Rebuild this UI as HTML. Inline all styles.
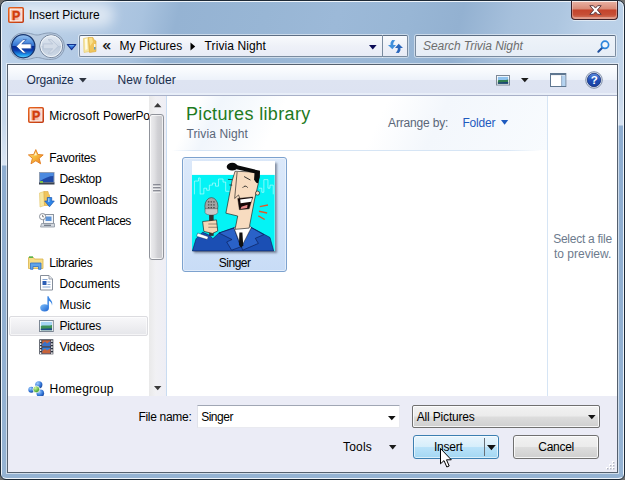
<!DOCTYPE html>
<html lang="en">
<head>
<meta charset="utf-8">
<title>Insert Picture</title>
<style>
html,body{margin:0;padding:0;}
body{width:625px;height:480px;overflow:hidden;position:relative;background:#6f6f6f;font-family:"Liberation Sans",sans-serif;font-size:12px;color:#000;}
div,span{position:absolute;box-sizing:border-box;white-space:nowrap;}
svg{position:absolute;overflow:visible;}
.t{line-height:14px;height:14px;}
/* frame */
#frame{left:0;top:0;width:625px;height:480px;border-radius:7px 7px 6px 6px;background:linear-gradient(104deg,#bdd3ea 0px,#b3cae4 90px,#a9c3df 140px,#95b3d3 175px,#98b6d5 260px,#9cb9d8 330px,#98b6d5 400px,#93b1d1 450px,#a6c0dc 500px,#adc6e0 545px,#b9cfe7 575px,#bcd2e9 640px);border:1px solid #1d2936;box-shadow:inset 0 0 0 1px #eef4fa;}
#lstrip{left:2px;top:30px;width:5px;height:447px;background:linear-gradient(180deg,#bcd2e9 0px,#c5d7eb 90px,#dbe6f3 135px,#8eadd0 136px,#95b3d3 447px);}
#rstrip{left:618px;top:30px;width:5px;height:447px;background:linear-gradient(180deg,#bcd2e9 0px,#c9d9ec 70px,#d6e2f1 95px,#8eadd0 96px,#95b3d3 447px);}
#bstrip{left:4px;top:472px;width:617px;height:6px;background:#95b3d3;border-radius:0 0 4px 4px;}
#glow{left:14px;top:3px;width:100px;height:24px;border-radius:12px;background:rgba(255,255,255,.55);filter:blur(6px);}
#title{left:29px;top:8px;font-size:12px;color:#000;}
#close{left:571px;top:1px;width:47px;height:19px;border-radius:0 0 4px 4px;border:1px solid #3c2028;border-top:none;background:linear-gradient(180deg,#e9b3a5 0%,#d98a76 44%,#c4432c 50%,#c64e36 75%,#d57a62 100%);box-shadow:inset 0 1px 0 rgba(255,255,255,.75),inset 0 -1px 0 1px rgba(255,255,255,.3),0 1px 0 rgba(255,255,255,.55);}
/* nav row */
.field{background:linear-gradient(180deg,#f8fafd 0%,#eef1f8 50%,#e8ecf6 100%);border:1px solid #7a8b9f;border-top-color:#5d6e84;border-radius:2px;box-shadow:0 0 0 1px rgba(255,255,255,.5);}
#addr{left:79px;top:35px;width:303px;height:22px;border-radius:2px 0 0 2px;border-right:none;}
#refresh{left:382px;top:35px;width:26px;height:22px;border-radius:0 2px 2px 0;clip-path:inset(-1px -1px -1px 0);}
#search{left:415px;top:35px;width:201px;height:22px;background:linear-gradient(180deg,#eef3f9 0%,#e6edf6 100%);}
#search .t{left:7px;top:3px;font-style:italic;color:#6d6d6d;letter-spacing:-0.07px;}
/* client */
#cborder{left:7px;top:64px;width:611px;height:409px;border:1px solid #55606e;box-shadow:0 0 0 1px rgba(255,255,255,.55);background:#fff;}
#toolbar{left:8px;top:65px;width:609px;height:31px;background:linear-gradient(180deg,#fdfeff 0px,#f6f9fd 7px,#edf2fa 14.500px,#dee4f2 15.500px,#dde3f2 28px,#e8eef8 28.500px,#e8eef8 30px);border-bottom:1px solid #a8b0c8;}
.tb{color:#1a2e4d;}
#navpane{left:8px;top:96px;width:141px;height:300px;background:#fff;overflow:hidden;}
#vscroll{left:149px;top:96px;width:17px;height:300px;background:linear-gradient(90deg,#e9e9e9 0%,#f1f1f4 40%,#eeeef5 100%);}
#vdiv{left:166px;top:96px;width:1px;height:300px;background:#c9dcf1;}
#pdiv{left:547px;top:96px;width:1px;height:300px;background:#d6e5f5;}
#bottom{left:8px;top:396px;width:609px;height:76px;background:#ebecf6;}
.btn{border:1px solid #707070;border-radius:3px;background:linear-gradient(180deg,#f2f2f2 0%,#ebebeb 48%,#dddddd 52%,#cfcfcf 100%);box-shadow:inset 0 0 0 1px rgba(255,255,255,.8);}
.g{color:#5a6678;}
</style>
</head>
<body>
<div id="frame"></div><div id="lstrip"></div><div id="rstrip"></div><div id="bstrip"></div>
<div id="glow"></div>
<!-- title -->
<svg style="left:8px;top:7px" width="16" height="16" viewBox="0 0 16 16">
  <defs><linearGradient id="gppa" x1="0" y1="0" x2="1" y2="1"><stop offset="0" stop-color="#e8651f"/><stop offset="1" stop-color="#c23a12"/></linearGradient></defs>
  <rect x="0.800" y="0.800" width="14.400" height="14.400" rx="1" fill="#fff" stroke="url(#gppa)" stroke-width="1.600"/>
  <rect x="2.600" y="2.600" width="10.800" height="10.800" fill="#f4bba6"/>
  <rect x="10.500" y="2.600" width="2.900" height="10.800" fill="#f9d6ca"/>
  <text x="4" y="13" font-family="Liberation Sans, sans-serif" font-weight="bold" font-size="12.500" fill="#d13c0c" stroke="#d13c0c" stroke-width="0.400">P</text>
</svg>
<span id="title" class="t">Insert Picture</span>
<div id="close">
  <svg style="left:17px;top:4px" width="13" height="10" viewBox="0 0 13 10">
    <path d="M0.8 0.7 L4.4 0.7 L6.5 3.1 L8.6 0.7 L12.2 0.7 L8.4 5 L12.2 9.300 L8.6 9.300 L6.5 6.900 L4.4 9.300 L0.8 9.300 L4.6 5 Z" fill="#fff" stroke="#5d3a40" stroke-width="1"/>
  </svg>
</div>
<!-- nav buttons -->
<svg style="left:8px;top:32px" width="72" height="30" viewBox="0 0 72 30">
  <defs>
    <linearGradient id="gback" x1="0" y1="0" x2="0" y2="1">
      <stop offset="0" stop-color="#9cc4f0"/><stop offset="0.25" stop-color="#5e9be4"/><stop offset="0.49" stop-color="#2f6fd0"/><stop offset="0.5" stop-color="#0a2a92"/><stop offset="0.68" stop-color="#0c3eb0"/><stop offset="0.86" stop-color="#1d93ea"/><stop offset="1" stop-color="#5fd6ff"/>
    </linearGradient>
    <linearGradient id="gfwd" x1="0" y1="0" x2="0" y2="1">
      <stop offset="0" stop-color="#e3eaf3"/><stop offset="0.49" stop-color="#ccd7e5"/><stop offset="0.5" stop-color="#bdcadb"/><stop offset="1" stop-color="#d0dbe8"/>
    </linearGradient>
  </defs>
  <path d="M15.300 0.900 C24 0.900 25 3 29.200 3 C33.500 3 34.500 0.900 43.200 0.900 A13.300 13.300 0 0 1 43.200 27.500 C34.500 27.500 33.500 25.500 29.200 25.500 C25 25.500 24 27.500 15.300 27.500 A13.300 13.300 0 0 1 15.300 0.900 Z" fill="#b9cbe0" stroke="#8a9db6" stroke-width="1"/>
  <circle cx="15.300" cy="14.200" r="11.600" fill="url(#gback)" stroke="#17356e" stroke-width="1.200"/>
  <circle cx="43.200" cy="14.200" r="11.400" fill="url(#gfwd)" stroke="#75859c" stroke-width="1"/>
  <circle cx="43.200" cy="14.200" r="10.400" fill="none" stroke="#f2f6fa" stroke-width="1"/>
  <path d="M8.300 14.300 L15 7.600 L18.300 7.600 L13.800 11.900 L23.200 11.900 L23.200 16.800 L13.800 16.800 L18.300 21.100 L15 21.100 Z" fill="#fff" stroke="#2f57a6" stroke-width="0.800" stroke-linejoin="round"/>
  <path d="M50.200 14.300 L43.500 7.600 L40.200 7.600 L44.700 11.900 L35.300 11.900 L35.300 16.800 L44.700 16.800 L40.200 21.100 L43.500 21.100 Z" fill="#d3dce8" stroke="#b3c0d2" stroke-width="0.700" stroke-linejoin="round"/>
  <path d="M59.300 12.500 L67.900 12.500 L63.600 17.600 Z" fill="#2f6fd8" stroke="#14308c" stroke-width="1.100" stroke-linejoin="round"/><path d="M60.800 13 L66.400 13 L65.400 14.200 L61.800 14.200 Z" fill="#5fa8f2"/>
</svg>

<!-- address bar -->
<div id="addr" class="field">
  <svg style="left:3px;top:1px" width="14" height="17" viewBox="0 0 14 17">
    <path d="M0.500 1.500 L5.500 0.500 L6.500 14.500 L1 15.500 Z" fill="#f7e7a0" stroke="#e2c468" stroke-width="0.600"/>
    <path d="M2 2 L4 1.500 L4.500 12 L2.300 13 Z" fill="#fffbe6"/>
    <path d="M5.500 0.500 L10 0.500 L11 3 L13 4 L13 14.500 L6.500 15.500 Z" fill="#f0c55c" stroke="#dba93c" stroke-width="0.600"/>
    <path d="M6 1 L9 1 L10 5 L7 9 Z" fill="#f8e08c"/>
    <rect x="11.200" y="7" width="1.200" height="3" fill="#fff"/><rect x="11.200" y="10" width="1.200" height="2.500" fill="#3b95dc"/>
  </svg>
  <span class="t" style="left:22.600px;top:1.500px;font-weight:normal;-webkit-text-stroke:0.250px #000;font-size:15px;line-height:14px;height:14px;letter-spacing:0">«</span>
  <span class="t" style="left:39.600px;top:3px">My Pictures</span>
  <svg style="left:110px;top:6px" width="6" height="9" viewBox="0 0 6 9"><path d="M0.500 0.500 L5.200 4.500 L0.500 8.500 Z" fill="#000"/></svg>
  <span class="t" style="left:124.600px;top:3px;letter-spacing:0.1px">Trivia Night</span>
  <svg style="left:289px;top:8.800px" width="8" height="5" viewBox="0 0 8 5"><path d="M0 0 L7.600 0 L3.800 4.600 Z" fill="#0a0a55"/></svg>
</div>
<div id="refresh" class="field">
  <svg style="left:4.800px;top:3.800px" width="15" height="13" viewBox="0 0 15 13">
    <path d="M4.200 0 C2.500 2 2.300 3.300 2.600 5 L0 5 L4.300 9.200 L8 5 L5.300 5 C5 3.500 5.500 2 7.300 0.200 Z" fill="#3f8fdc"/>
    <path d="M10.800 13 C12.500 11 12.700 9.700 12.400 8 L15 8 L10.700 3.800 L7 8 L9.700 8 C10 9.500 9.500 11 7.700 12.800 Z" fill="#2a66bc"/>
  </svg>
</div>
<div id="search" class="field">
  <span class="t">Search Trivia Night</span>
  <svg style="left:180px;top:3px" width="16" height="16" viewBox="0 0 16 16">
    <path d="M6.500 8.500 L2.300 12.700" stroke="#1f4f9c" stroke-width="2" stroke-linecap="round"/>
    <circle cx="9" cy="5.800" r="3.600" fill="#f2f7fc" stroke="#2f86dc" stroke-width="1.700"/>
  </svg>
</div>

<!-- client -->
<div id="cborder"></div>
<div id="toolbar">
  <span class="t tb" style="left:18.500px;top:8px;letter-spacing:-0.2px">Organize</span>
  <svg style="left:70.700px;top:13px" width="8" height="5" viewBox="0 0 8 5"><path d="M0 0 L7.700 0 L3.850 4.400 Z" fill="#2e3440"/></svg>
  <span class="t tb" style="left:109.500px;top:8px;letter-spacing:0.1px">New folder</span>
  <svg style="left:488.400px;top:9.800px" width="14" height="11" viewBox="0 0 14 11">
    <rect x="0.500" y="0.500" width="13" height="9.500" fill="#fff" stroke="#7d8896"/>
    <rect x="1.800" y="1.800" width="10.400" height="3.700" fill="#8fc3ee"/>
    <path d="M1.800 5.500 C4 4 7 6 12.200 4.500 L12.200 8.700 L1.800 8.700 Z" fill="#2f7d4f"/>
    <path d="M1.800 7.500 L12.200 7 L12.200 8.700 L1.800 8.700 Z" fill="#1d3f7a"/>
  </svg>
  <svg style="left:512.800px;top:13.100px" width="8" height="5" viewBox="0 0 8 5"><path d="M0 0 L7.600 0 L3.800 4.300 Z" fill="#1c1c1c"/></svg>
  <svg style="left:541.900px;top:7.700px" width="17" height="15" viewBox="0 0 17 15">
    <rect x="0.500" y="0.500" width="15.300" height="13" fill="#fff" stroke="#5f7690"/>
    <rect x="0.500" y="0.500" width="15.300" height="1.600" fill="#5f7690"/>
    <rect x="11.800" y="2.500" width="3.500" height="10.500" fill="#b5d3f0"/>
    <rect x="11.300" y="2.500" width="0.800" height="10.500" fill="#7f9ab8"/>
  </svg>
  <svg style="left:576.800px;top:5.600px" width="18" height="18" viewBox="0 0 18 18">
    <defs><linearGradient id="gh" x1="0" y1="0" x2="0" y2="1"><stop offset="0" stop-color="#5f8fe0"/><stop offset="0.5" stop-color="#1f4fb8"/><stop offset="1" stop-color="#1a3f9c"/></linearGradient></defs>
    <circle cx="9" cy="9" r="8.300" fill="#dfe6f0" stroke="#6e7f99" stroke-width="0.800"/>
    <circle cx="9" cy="9" r="6.700" fill="url(#gh)" stroke="#16307a" stroke-width="0.800"/>
    <text x="5.700" y="13.200" font-family="Liberation Sans, sans-serif" font-weight="bold" font-size="11.500" fill="#fff">?</text>
  </svg>
</div>
<div id="navpane">
  <svg style="left:20px;top:11px" width="16" height="16" viewBox="0 0 16 16">
    <rect x="0.800" y="0.800" width="14.400" height="14.400" rx="1" fill="#fff" stroke="url(#gppa)" stroke-width="1.600"/>
    <rect x="2.600" y="2.600" width="10.800" height="10.800" fill="#f4bba6"/>
    <rect x="10.500" y="2.600" width="2.900" height="10.800" fill="#f9d6ca"/>
    <text x="4" y="13" font-family="Liberation Sans, sans-serif" font-weight="bold" font-size="12.500" fill="#d13c0c" stroke="#d13c0c" stroke-width="0.400">P</text>
  </svg>
  <span class="t" style="left:41.200px;top:13px;letter-spacing:0.17px">Microsoft <b style="font-weight:normal;letter-spacing:-0.27px">PowerPoint</b></span>

  <svg style="left:20px;top:52.500px" width="16" height="16" viewBox="0 0 16 16">
    <defs><linearGradient id="gstar" x1="0" y1="0" x2="1" y2="1"><stop offset="0" stop-color="#fde58a"/><stop offset="0.5" stop-color="#f6b93c"/><stop offset="1" stop-color="#e8751e"/></linearGradient></defs>
    <path d="M7.800 0.600 L9.900 5.500 L15.200 5.900 L11.200 9.300 L12.600 14.800 L7.800 11.800 L3 14.800 L4.400 9.300 L0.400 5.900 L5.700 5.500 Z" fill="url(#gstar)" stroke="#e27d20" stroke-width="0.900" stroke-linejoin="round"/>
    <path d="M7.800 3 L8.900 6.300 L6 6.500 Z" fill="#fff6cf"/>
  </svg>
  <span class="t" style="left:41.300px;top:55px;letter-spacing:-0.33px">Favorites</span>

  <svg style="left:30.600px;top:76px" width="16" height="13" viewBox="0 0 16 13">
    <rect x="0.500" y="0.500" width="14.500" height="10" fill="#1f4aa8" stroke="#8e9db4"/>
    <path d="M1 1 L14.500 1 L14.500 4 C10 4 6 6 1 9 Z" fill="#4b8ae0"/>
    <rect x="0" y="10.500" width="15.500" height="2" fill="#3a4350"/>
    <rect x="1" y="9" width="3" height="2" fill="#7fc24a"/>
  </svg>
  <span class="t" style="left:51.400px;top:76px;letter-spacing:-0.3px">Desktop</span>

  <svg style="left:31px;top:94.500px" width="16" height="17" viewBox="0 0 16 17">
    <path d="M0.500 2 L5 0.500 L5.500 14.500 L1 16 Z" fill="#f7e7a0" stroke="#e2c468" stroke-width="0.600"/>
    <path d="M5 0.500 L9 0.500 L9.500 3 L10.500 4 L10.500 14.500 L5.500 14.500 Z" fill="#f0c55c" stroke="#dba93c" stroke-width="0.600"/>
    <path d="M8.300 6.500 L12.700 6.500 L12.700 10 L15.300 10 L10.500 15.800 L5.700 10 L8.300 10 Z" fill="#2f86e6" stroke="#1a58b4" stroke-width="0.700" stroke-linejoin="round"/>
    <path d="M9 7.200 L10.500 7.200 L10.500 11 L9 11 Z" fill="#8fc6f8"/>
  </svg>
  <span class="t" style="left:51.400px;top:97px;letter-spacing:-0.13px">Downloads</span>

  <svg style="left:30.600px;top:117px" width="16" height="15" viewBox="0 0 16 15">
    <rect x="4.500" y="1.500" width="10" height="9" fill="#f2f5f9" stroke="#8c949f"/>
    <rect x="6.500" y="3.500" width="6" height="4.500" fill="#5f95d8"/>
    <circle cx="3.600" cy="3.600" r="3.100" fill="#fff" stroke="#7e858f" stroke-width="0.900"/>
    <path d="M3.600 1.800 L3.600 3.800 L5 3.800" fill="none" stroke="#555" stroke-width="0.700"/>
    <path d="M2.500 10.500 L15.500 10.500 L15.500 14 L1.500 14 Z" fill="#d3d8df" stroke="#8c949f" stroke-width="0.800"/>
    <rect x="5" y="11.700" width="7" height="1.200" fill="#6e7784"/>
  </svg>
  <span class="t" style="left:51.400px;top:118px;letter-spacing:-0.45px">Recent Places</span>

  <svg style="left:20px;top:160px" width="16" height="14" viewBox="0 0 16 14">
    <path d="M0.500 1.500 L5.500 1.500 L6.500 3 L15 3 L15 12.500 L0.500 12.500 Z" fill="#f6dc86" stroke="#d9b24a" stroke-width="0.800"/>
    <rect x="1" y="0.300" width="4" height="1.700" fill="#5db34b"/>
    <path d="M2.500 7 L13 7 L13 13.300 L10.500 13.300 L10.500 10.500 L5 10.500 L5 13.300 L2.500 13.300 Z" fill="#5fa4ea" stroke="#2d6ec8" stroke-width="0.800"/>
  </svg>
  <span class="t" style="left:41.300px;top:160px;letter-spacing:-0.33px">Libraries</span>

  <svg style="left:32px;top:179.400px" width="14" height="16" viewBox="0 0 14 16">
    <path d="M0.500 0.500 L9 0.500 L12.500 4 L12.500 15 L0.500 15 Z" fill="#fff" stroke="#868e9a"/>
    <path d="M9 0.500 L9 4 L12.500 4" fill="#e6e9ee" stroke="#868e9a" stroke-width="0.800"/>
    <path d="M2.500 4.500 H7.500 M7.500 7 H10.500 M7.500 9.500 H10.500 M2.500 12 H10.500" stroke="#86a6d2" stroke-width="1"/>
    <rect x="2.500" y="6" width="4" height="4" fill="#2c5eb5"/>
  </svg>
  <span class="t" style="left:51.400px;top:181px">Documents</span>

  <svg style="left:31.700px;top:200px" width="14" height="16" viewBox="0 0 14 16">
    <defs><linearGradient id="gmus" x1="0" y1="0" x2="1" y2="1"><stop offset="0" stop-color="#7fc0fa"/><stop offset="1" stop-color="#1c62d0"/></linearGradient></defs>
    <ellipse cx="4.600" cy="11.800" rx="4.400" ry="3.600" fill="url(#gmus)"/>
    <path d="M7.400 11.800 L7.400 0.300 L8.600 0.300 C9 3.200 13.600 4.600 12 9.800 C12.200 7.200 10.300 5.400 8.900 4.800 L8.900 11.800 Z" fill="#3a86e4"/>
  </svg>
  <span class="t" style="left:51.400px;top:202px">Music</span>

  <div style="left:1px;top:220px;width:139px;height:20px;border:1px solid #dcdce0;border-radius:2px;background:linear-gradient(180deg,#f8f8fa 0%,#efeff2 50%,#e5e6ea 100%);box-shadow:inset 0 0 0 1px rgba(255,255,255,.6)"></div>
  <svg style="left:30.600px;top:224px" width="15" height="12" viewBox="0 0 15 12">
    <rect x="0.500" y="0.500" width="13.800" height="11" fill="#fff" stroke="#7c8794"/>
    <rect x="1.800" y="1.800" width="11.200" height="4.200" fill="#a5d4f4"/>
    <path d="M1.800 6 C5 4.500 8 6.500 13 5 L13 10.200 L1.800 10.200 Z" fill="#3c9158"/>
    <path d="M1.800 8.800 L13 8.200 L13 10.200 L1.800 10.200 Z" fill="#1f4d8a"/>
  </svg>
  <span class="t" style="left:51.400px;top:223px;letter-spacing:-0.22px">Pictures</span>

  <svg style="left:30.600px;top:242.700px" width="15" height="16" viewBox="0 0 15 16">
    <rect x="0.300" y="0.300" width="14" height="15" fill="#2e3440"/>
    <rect x="3.200" y="1.300" width="8.200" height="6" fill="#c8643a"/>
    <path d="M3.200 5 L6 2.500 L8 4.500 L11.400 2 L11.400 7.300 L3.200 7.300 Z" fill="#3a72c8"/>
    <rect x="3.200" y="8.500" width="8.200" height="6" fill="#3b7fd6"/>
    <path d="M3.200 12 L6 9.800 L8 11.500 L11.400 9.500 L11.400 14.500 L3.200 14.500 Z" fill="#c8643a"/>
    <path d="M1.700 1.300 V15 M12.900 1.300 V15" stroke="#fff" stroke-width="1.300" stroke-dasharray="1.600 1.400"/>
  </svg>
  <span class="t" style="left:51.400px;top:244px;letter-spacing:-0.25px">Videos</span>

  <svg style="left:20px;top:285px" width="17" height="17" viewBox="0 0 17 17">
    <defs><radialGradient id="gb" cx="0.35" cy="0.3" r="0.8"><stop offset="0" stop-color="#9fd0ff"/><stop offset="0.6" stop-color="#2f72d6"/><stop offset="1" stop-color="#17408f"/></radialGradient>
    <radialGradient id="gg" cx="0.35" cy="0.3" r="0.8"><stop offset="0" stop-color="#d6f5a0"/><stop offset="0.7" stop-color="#4fae3a"/><stop offset="1" stop-color="#2c7a22"/></radialGradient></defs>
    <circle cx="3.300" cy="8.800" r="3" fill="url(#gb)"/>
    <circle cx="10.800" cy="3.800" r="3.600" fill="url(#gb)"/>
    <circle cx="12.300" cy="12.300" r="3.800" fill="url(#gb)"/>
    <circle cx="8.300" cy="8.300" r="3.400" fill="url(#gg)" stroke="#fff" stroke-width="0.800"/>
  </svg>
  <span class="t" style="left:41.600px;top:286px;letter-spacing:0.14px">Homegroup</span>
</div>

<div id="vscroll">
  <svg style="left:4.500px;top:6.800px" width="8" height="5" viewBox="0 0 8 5"><path d="M0 4.300 L7.400 4.300 L3.700 0 Z" fill="#3a3a3a"/></svg>
  <div style="left:0px;top:18px;width:15px;height:146px;border:1px solid #90939b;border-radius:3px;background:linear-gradient(90deg,#eeeef0 0%,#e0e0e3 35%,#d0d0d4 60%,#c8c8cc 100%);box-shadow:inset 0 0 0 1px rgba(255,255,255,.7)"></div>
  <svg style="left:4px;top:88px" width="8" height="9" viewBox="0 0 8 9"><path d="M0 1 H7.500 M0 4 H7.500 M0 7 H7.500" stroke="#3c4050" stroke-width="1"/><path d="M0 2 H7.500 M0 5 H7.500 M0 8 H7.500" stroke="#fff" stroke-width="1"/></svg>
  <svg style="left:4.800px;top:289.500px" width="8" height="5" viewBox="0 0 8 5"><path d="M0 0 L7.400 0 L3.700 4.300 Z" fill="#3a3a3a"/></svg>
</div>
<div id="vdiv"></div>
<!-- content -->
<div style="left:167px;top:96px;width:380px;height:54px;background:linear-gradient(115deg,#fff 0%,#fff 8%,#f1f6fc 14%,#f7fafd 22%,#fff 30%,#fff 55%,#f3f7fc 70%,#f8fbfe 100%)"></div>
<span style="left:186px;top:102.400px;font-size:18px;line-height:24px;height:24px;letter-spacing:0.35px;color:#1e7a1e">Pictures library</span>
<span class="t g" style="left:186.500px;top:127px;letter-spacing:0.1px">Trivia Night</span>
<span class="t g" style="left:388.100px;top:116px;letter-spacing:-0.18px">Arrange by:</span>
<span class="t" style="left:462.400px;top:116px;letter-spacing:-0.2px;color:#1e5abf">Folder</span>
<svg style="left:501.300px;top:119.800px" width="8" height="5" viewBox="0 0 8 5"><path d="M0 0 L7.200 0 L3.600 4.800 Z" fill="#1e5abf"/></svg>
<div style="left:172px;top:150px;width:370px;height:1px;background:linear-gradient(90deg,rgba(214,229,245,0),#d6e5f5 6%,#d6e5f5 90%,rgba(214,229,245,0))"></div>
<div style="left:182px;top:157px;width:105px;height:115px;border:1px solid #7da2ce;border-radius:3px;background:linear-gradient(180deg,#dce9fa 0%,#c8dcf6 100%);box-shadow:inset 0 0 0 1px rgba(255,255,255,.45)"></div>
<div style="left:192px;top:160.800px;width:83px;height:90px;background:#fff;box-shadow:1.500px 1.500px 2px rgba(60,70,90,.55)"></div>
<svg style="left:192.200px;top:160.800px" width="82.700" height="90" viewBox="20 22 405 440" preserveAspectRatio="none">
  <rect x="20" y="22" width="405" height="440" fill="#fff"/>
  <rect x="20" y="90" width="405" height="372" fill="#04f3f5"/>
  <path d="M32 180 V115 H52 V100 H60 V180 M60 178 H78 V150 H92 V160 H105 V135 H120 V125 H135 V140 H150 V105 H172 V120 H185 V165 H205 M348 150 H362 V170 H372 V108 H392 V150 H402 V135 H418 V180" fill="none" stroke="#d4ffff" stroke-width="3" transform="translate(0,5)"/>
  <path d="M22 462 L40 402 L72 370 L108 386 L122 402 L152 374 L236 344 L306 344 L402 396 L420 462 Z" fill="#1b4fb4" stroke="#08194f" stroke-width="3"/>
  <path d="M152 374 L226 350 L258 442 L214 458 L190 418 L216 406 Z" fill="#2a62c8" stroke="#08194f" stroke-width="3"/>
  <path d="M310 348 L372 382 L330 400 L345 425 L268 458 L262 440 Z" fill="#2a62c8" stroke="#08194f" stroke-width="3"/>
  <path d="M226 350 L262 442 L310 348 L300 332 L240 336 Z" fill="#fff" stroke="#222" stroke-width="2"/>
  <path d="M252 372 L267 372 L271 434 L261 446 L250 432 Z" fill="#111"/>
  <path d="M231 72 L349 77 L345 130 L336 170 L326 212 L300 350 L231 356 L244 291 L186 277 L216 120 Z" fill="#f8dcc0" stroke="#111" stroke-width="3" stroke-linejoin="round"/>
  <circle cx="341" cy="179" r="10" fill="#f8dcc0" stroke="#111" stroke-width="3"/>
  <ellipse cx="217" cy="50" rx="27" ry="19" fill="#0a0a0a"/>
  <path d="M236 42 L353 70 L352 102 L343 131 L335 128 L324 114 L326 82 L238 62 Z" fill="#0a0a0a"/>
  <path d="M244 205 L318 198 L300 256 L252 260 Z" fill="#140606" stroke="#111" stroke-width="2"/>
  <path d="M256 210 L314 203 L310 221 L258 228 Z" fill="#fff"/>
  <path d="M262 246 L292 236 L290 252 L258 257 Z" fill="#e88a8a"/>
  <path d="M268 153 Q280 137 293 152" fill="none" stroke="#111" stroke-width="4"/>
  <path d="M275 98 L306 115" stroke="#111" stroke-width="4"/>
  <path d="M196 112 L217 113 M203 139 L217 140" stroke="#222" stroke-width="4"/>
  <path d="M241 76 L229 205 L248 188 L255 208" fill="none" stroke="#111" stroke-width="3" stroke-linejoin="round"/>
  <path d="M352 245 L392 237 M348 268 L388 276 M345 290 L376 308" stroke="#e0582a" stroke-width="7"/>
  <rect x="104" y="280" width="22" height="108" fill="#333"/>
  <ellipse cx="115" cy="243" rx="32" ry="42" fill="#a4a4a4" stroke="#3c3c3c" stroke-width="3"/>
  <path d="M84 255 H146 V275 C140 290 90 290 84 275 Z" fill="#c9c9c9" stroke="#3c3c3c" stroke-width="2"/>
  <path d="M98 222 H134 M98 236 H134 M98 250 H134" stroke="#4a4a4a" stroke-width="6" stroke-dasharray="7 6"/>
  <path d="M72 318 L140 310 L146 364 L120 376 L78 366 Z" fill="#f6d6b4" stroke="#111" stroke-width="3" stroke-linejoin="round"/>
  <path d="M100 330 H142 M100 346 H144" stroke="#111" stroke-width="2"/>
  <path d="M48 374 L100 392 L95 406 L42 390 Z" fill="#fff" stroke="#08194f" stroke-width="2"/>
</svg>
<span class="t" style="left:218.800px;top:256px;letter-spacing:-0.5px">Singer</span>

<!-- preview -->
<div id="pdiv"></div>
<span class="t" style="left:553.200px;top:232px;letter-spacing:-0.26px;color:#6d7b8d">Select a file</span>
<span class="t" style="left:554px;top:247px;color:#6d7b8d">to preview.</span>

<!-- bottom -->
<div id="bottom"></div>
<span class="t" style="left:138.400px;top:410px;letter-spacing:-0.3px">File name:</span>
<div style="left:197px;top:405px;width:203px;height:23px;background:#fff;border:1px solid #e9eaf0;border-top-color:#a0a6b4;border-left-color:#e0e2ea"></div>
<span class="t" style="left:201.200px;top:410px;letter-spacing:-0.5px">Singer</span>
<svg style="left:387.700px;top:416.300px" width="8" height="5" viewBox="0 0 8 5"><path d="M0 0 L7.600 0 L3.800 4.300 Z" fill="#111"/></svg>
<div class="btn" style="left:412px;top:405px;width:188px;height:23px;border-radius:2px"></div>
<span class="t" style="left:416.800px;top:410px;letter-spacing:-0.18px">All Pictures</span>
<svg style="left:587.600px;top:415.300px" width="8" height="5" viewBox="0 0 8 5"><path d="M0 0 L7.600 0 L3.800 4.300 Z" fill="#111"/></svg>

<span class="t" style="left:343px;top:440px;letter-spacing:0.2px">Tools</span>
<svg style="left:388.900px;top:444.700px" width="8" height="5" viewBox="0 0 8 5"><path d="M0 0 L7.400 0 L3.700 4.600 Z" fill="#1a1a1a"/></svg>
<div class="btn" style="left:413px;top:435px;width:86px;height:24px;border-color:#3c7fb1;background:linear-gradient(180deg,#e9f5fd 0%,#d6eefb 48%,#b9e2f9 52%,#a3d7f3 100%);box-shadow:inset 0 0 0 1px rgba(255,255,255,.6)"></div>
<div style="left:484px;top:438px;width:1px;height:18px;background:#687078"></div>
<span class="t" style="left:434px;top:440px;letter-spacing:-0.25px">Insert</span>
<svg style="left:486.900px;top:444.800px" width="9" height="6" viewBox="0 0 9 6"><path d="M0 0 L8.800 0 L4.400 5.200 Z" fill="#111"/></svg>
<div class="btn" style="left:513px;top:435px;width:86px;height:24px"></div>
<span class="t" style="left:538.300px;top:440px;letter-spacing:-0.28px">Cancel</span>
<!-- cursor -->
<svg style="left:440.200px;top:448px" width="13" height="20" viewBox="0 0 13 20"><path d="M0.500 0.500 L0.500 15.800 L4 12.600 L6.800 19 L9.200 18 L6.500 11.800 L11.300 11.800 Z" fill="#fff" stroke="#000" stroke-width="1" stroke-linejoin="round"/></svg>
<!-- grip -->
<svg style="left:604px;top:460px" width="12" height="12" viewBox="0 0 12 12"><g fill="#fff"><rect x="8" y="1" width="2" height="2"/><rect x="5" y="4" width="2" height="2"/><rect x="8" y="4" width="2" height="2"/><rect x="2" y="7" width="2" height="2"/><rect x="5" y="7" width="2" height="2"/><rect x="8" y="7" width="2" height="2"/></g><g fill="#b5b8c4"><rect x="9" y="2" width="1.500" height="1.500"/><rect x="6" y="5" width="1.500" height="1.500"/><rect x="9" y="5" width="1.500" height="1.500"/><rect x="3" y="8" width="1.500" height="1.500"/><rect x="6" y="8" width="1.500" height="1.500"/><rect x="9" y="8" width="1.500" height="1.500"/></g></svg>
</body>
</html>
